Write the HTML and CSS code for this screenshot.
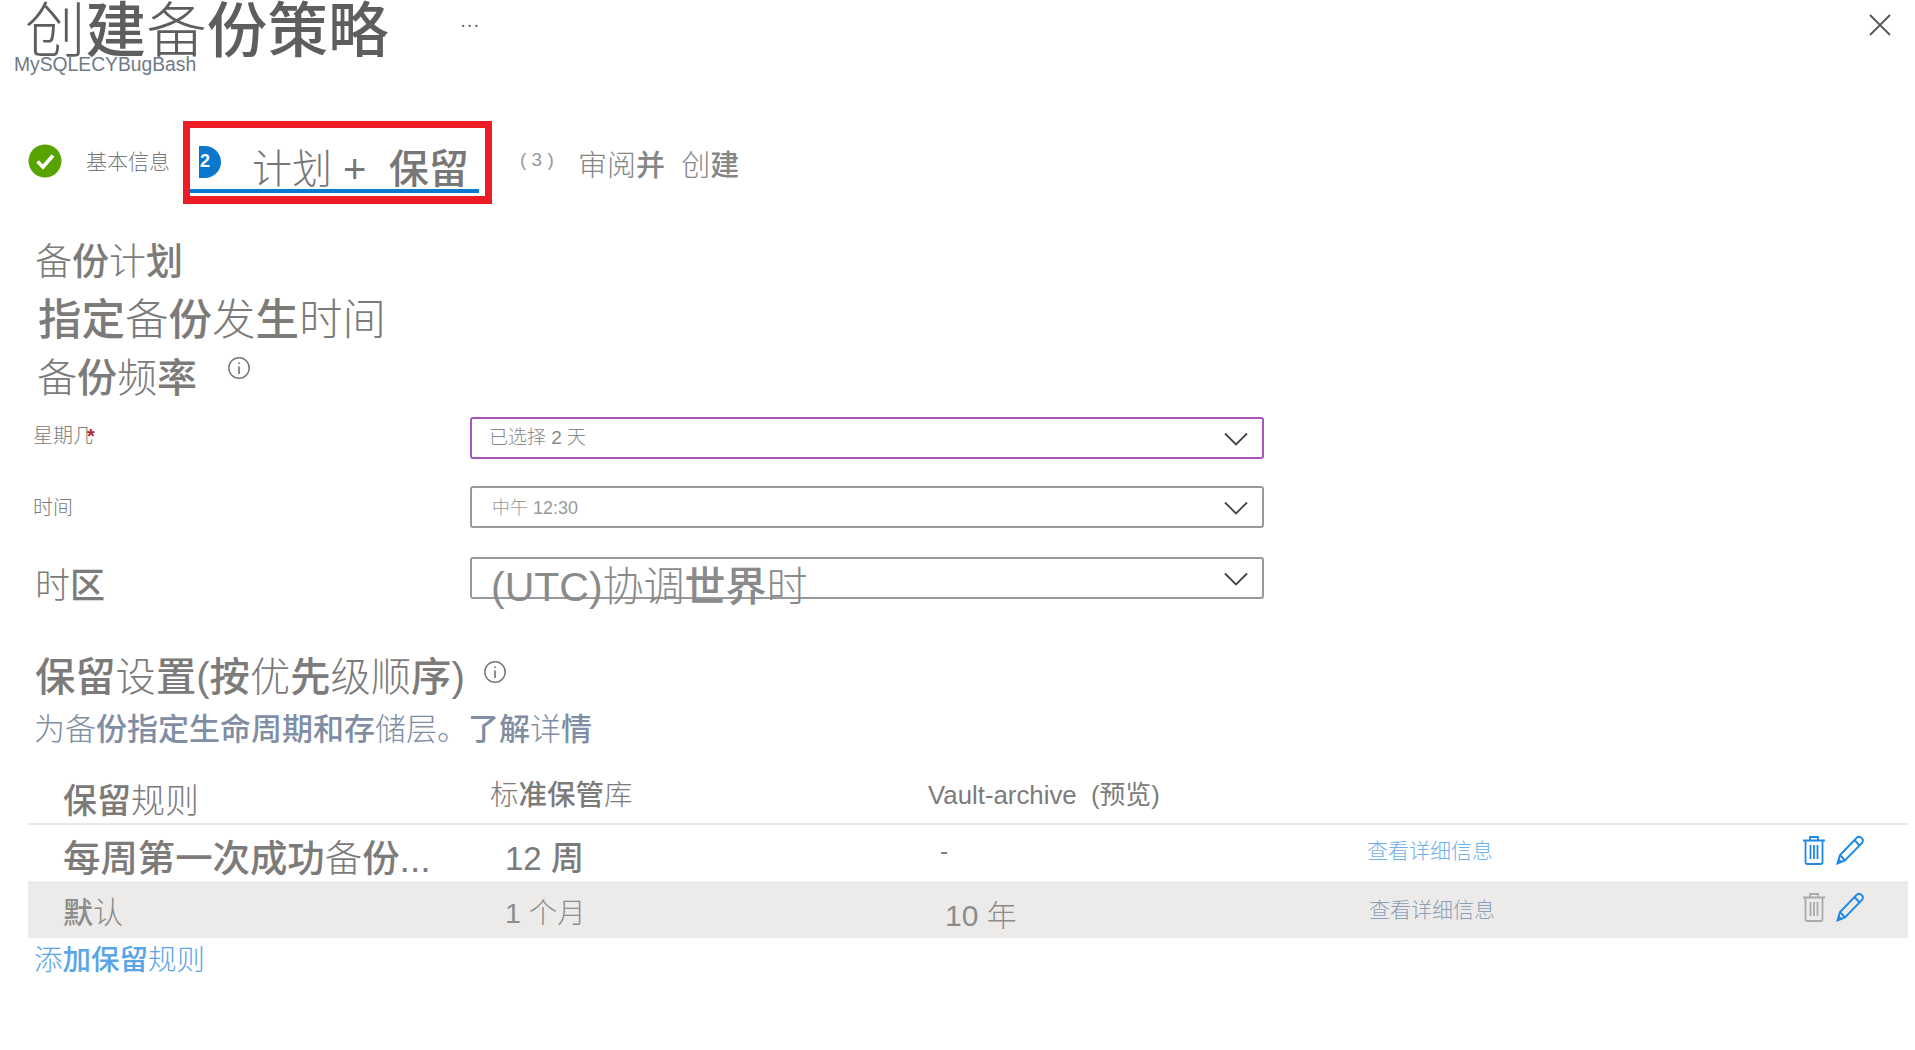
FILE: index.html
```html
<!DOCTYPE html>
<html lang="zh-CN">
<head>
	<meta charset="UTF-8">
	<title>创建备份策略</title>
	<link rel="stylesheet" href="styles.css">
</head>
<body>
<div class="page">
	<header class="top">
		<h1 class="title">创<b>建</b>备<b>份策略</b></h1>
		<span class="more">···</span>
		<svg class="close" width="24" height="24" viewBox="0 0 24 24"><path d="M2 2L22 22M22 2L2 22" stroke="#555" stroke-width="1.8" fill="none"/></svg>
	</header>
	<div class="sub">MySQLECYBugBash</div>

	<nav class="steps">
		<div class="step-done">
			<svg width="34" height="34" viewBox="0 0 34 34"><circle cx="17" cy="17" r="16.5" fill="#57a300"/><path d="M9.5 17.5L15 23L25 11.5" stroke="#fff" stroke-width="3.6" fill="none"/></svg>
			<span class="step-small">基本信息</span>
		</div>
		<div class="step-now">
			<span class="badge">2</span>
			<span class="step-big">计划 +&nbsp; <b>保留</b></span>
		</div>
		<div class="step-next">
			<span class="num">( 3 )</span>
			<span class="step-mid">审阅<b>并</b>&nbsp; 创<b>建</b></span>
		</div>
	</nav>

	<section class="plan">
		<h2 class="h-plan">备<b>份</b>计<b>划</b></h2>
		<h3 class="h-when"><b>指定</b>备<b>份</b>发<b>生</b>时间</h3>
		<h3 class="h-freq">备<b>份</b>频<b>率</b>
			<svg class="info" width="24" height="24" viewBox="0 0 24 24"><circle cx="12" cy="12" r="10.2" stroke="#777" stroke-width="1.5" fill="none"/><path d="M12 6.5V8M12 10.5V18" stroke="#666" stroke-width="1.5"/></svg>
		</h3>

		<div class="field field-day">
			<label class="lab">星期几<span class="req">*</span></label>
			<div class="select select-on">
				<span class="val-a">已选择 2 天</span>
				<svg class="chev" width="24" height="14" viewBox="0 0 24 14"><path d="M1 1.5L12 12.5L23 1.5" stroke="#444" stroke-width="1.8" fill="none"/></svg>
			</div>
		</div>
		<div class="field field-time">
			<label class="lab">时间</label>
			<div class="select">
				<span class="val-b">中午 12:30</span>
				<svg class="chev" width="24" height="14" viewBox="0 0 24 14"><path d="M1 1.5L12 12.5L23 1.5" stroke="#444" stroke-width="1.8" fill="none"/></svg>
			</div>
		</div>
		<div class="field field-zone">
			<label class="lab lab-big">时<b>区</b></label>
			<div class="select">
				<span class="val-c">(UTC)协调<b>世界</b>时</span>
				<svg class="chev" width="24" height="14" viewBox="0 0 24 14"><path d="M1 1.5L12 12.5L23 1.5" stroke="#444" stroke-width="1.8" fill="none"/></svg>
			</div>
		</div>
	</section>

	<section class="keep">
		<h3 class="h-keep"><b>保留</b>设<b>置</b>(<b>按</b>优<b>先</b>级顺<b>序</b>)
			<svg class="info" width="24" height="24" viewBox="0 0 24 24"><circle cx="12" cy="12" r="10.2" stroke="#777" stroke-width="1.5" fill="none"/><path d="M12 6.5V8M12 10.5V18" stroke="#666" stroke-width="1.5"/></svg>
		</h3>
		<p class="note">为备<b>份指定生命周期和存</b>储层。<b>了解</b>详<b>情</b></p>

		<div class="rules">
			<div class="row row-head">
				<div class="c1 head-a"><b>保留</b>规则</div>
				<div class="c2 head-b">标<b>准保管</b>库</div>
				<div class="c3 head-c">Vault-archive&nbsp; (预览)</div>
			</div>
			<div class="row row-one">
				<div class="c1 name-a"><b>每周第一次成功</b>备<b>份</b>...</div>
				<div class="c2 keep-a">12 <b>周</b></div>
				<div class="c3 dash">-</div>
				<div class="c4 more-a">查看详细信息</div>
				<div class="c5">
					<svg class="trash-on" width="24" height="30" viewBox="0 0 24 30"><path d="M1 5.5H23M8 5V2H16V5M3.5 6V27.5Q3.5 29 5 29H19Q20.5 29 20.5 27.5V6M8.5 10V24M12 10V24M15.5 10V24" stroke="currentColor" stroke-width="1.8" fill="none"/></svg>
					<svg class="pen" width="28" height="30" viewBox="0 0 28 30"><path d="M1.5 28.5L4 20L21 2.5Q23 1 25 2.5L26.5 4Q27.5 6 26 8L9 25.5ZM4 20L9 25.5M18.5 5L23.5 10.5" stroke="#1e88e5" stroke-width="1.9" fill="none"/><path d="M1.5 28.5L3 23.5L6.5 27Z" fill="#1e88e5"/></svg>
				</div>
			</div>
			<div class="row row-two">
				<div class="c1 name-b"><b>默</b>认</div>
				<div class="c2 keep-b">1 个月</div>
				<div class="c3 year">10 年</div>
				<div class="c4 more-b">查看详细信息</div>
				<div class="c5">
					<svg class="trash-off" width="24" height="30" viewBox="0 0 24 30"><path d="M1 5.5H23M8 5V2H16V5M3.5 6V27.5Q3.5 29 5 29H19Q20.5 29 20.5 27.5V6M8.5 10V24M12 10V24M15.5 10V24" stroke="currentColor" stroke-width="1.8" fill="none"/></svg>
					<svg class="pen" width="28" height="30" viewBox="0 0 28 30"><path d="M1.5 28.5L4 20L21 2.5Q23 1 25 2.5L26.5 4Q27.5 6 26 8L9 25.5ZM4 20L9 25.5M18.5 5L23.5 10.5" stroke="#1e88e5" stroke-width="1.9" fill="none"/><path d="M1.5 28.5L3 23.5L6.5 27Z" fill="#1e88e5"/></svg>
				</div>
			</div>
		</div>
		<a class="add">添<b>加保留</b>规则</a>
	</section>
</div>
</body>
</html>
```

FILE: styles.css
```css
* {
	box-sizing: border-box;
}

html, body {
	margin: 0;
	height: 100%;
	background: #fff;
	overflow: hidden;
}

body {
	font-family: "Liberation Sans", "Noto Sans CJK SC", sans-serif;
	font-weight: 300;
	color: #7d7b7a;
}

b {
	font-weight: 500;
}

h1, h2, h3, p {
	margin: 0;
	font-weight: 300;
}

.page {
	width: 1915px;
	height: 1050px;
}

/* header */
.top {
	display: flex;
	align-items: flex-start;
	height: 55px;
	padding-left: 25px;
	padding-right: 23px;
}

.title {
	font-size: 60.6px;
	line-height: 60px;
	height: 55px;
	padding-top: 1px;
	color: #605e5c;
}

.more {
	margin-left: 71px;
	margin-top: 12px;
	font-size: 20px;
	line-height: 24px;
	color: #666;
}

.close {
	margin-left: auto;
	margin-top: 13px;
}

.sub {
	margin-left: 14px;
	font-size: 19.3px;
	line-height: 20px;
	color: #6f7a85;
}

/* steps */
.steps {
	display: flex;
	align-items: flex-start;
	margin-top: 46px;
	height: 83px;
}

.step-done {
	display: flex;
	align-items: center;
	width: 183px;
	height: 80px;
	padding-left: 28px;
}

.step-small {
	margin-left: 24px;
	font-size: 21px;
	margin-top: -2px;
	color: #777;
}

.step-now {
	position: relative;
	width: 309px;
	height: 83px;
	border: 7px solid #ed1c24;
	border-bottom-width: 8px;
	overflow: hidden;
	display: flex;
	align-items: center;
	padding-left: 62px;
}

.step-now::after {
	content: "";
	position: absolute;
	left: 0;
	right: 6px;
	bottom: 3px;
	height: 4px;
	background: #0b78d0;
}

.badge {
	position: absolute;
	left: 9px;
	top: 18px;
	width: 22px;
	height: 32px;
	padding-left: 1px;
	border-radius: 0 16px 16px 0;
	background: #0b78d0;
	color: #fff;
	font-size: 18px;
	font-weight: 700;
	line-height: 31px;
}

.step-big {
	font-size: 40px;
	line-height: 50px;
	margin-top: 14px;
	white-space: nowrap;
	color: #777;
}

.step-next {
	display: flex;
	align-items: center;
	height: 80px;
	margin-left: 28px;
}

.num {
	width: 58px;
	font-size: 19px;
	color: #999;
	white-space: nowrap;
	margin-top: -2px;
}

.step-mid {
	font-size: 29px;
	margin-top: 4px;
	color: #868686;
	white-space: nowrap;
}

/* plan */
.plan {
	padding-left: 35px;
}

.h-plan {
	margin-top: 34px;
	font-size: 37px;
	line-height: 50px;
}

.h-when {
	margin-left: 3px;
	margin-top: 7px;
	font-size: 43.5px;
	line-height: 50px;
}

.h-freq {
	margin-left: 2px;
	margin-top: 8px;
	font-size: 40px;
	line-height: 50px;
	display: flex;
}

.info {
	margin-left: 30px;
	margin-top: 3px;
}

.field {
	display: flex;
	align-items: flex-start;
	margin-left: -35px;
}

.lab {
	width: 470px;
	padding-left: 33px;
	font-size: 20px;
	line-height: 28px;
	color: #7d7b7a;
}

.req {
	color: #b3262e;
	font-weight: 700;
	margin-left: -6px;
}

.lab-big {
	font-size: 35px;
	line-height: 50px;
	padding-left: 35px;
}

.select {
	position: relative;
	display: flex;
	align-items: center;
	width: 794px;
	height: 42px;
	border: 2px solid #999;
	border-radius: 3px;
}

.select-on {
	border-color: #a855bd;
}

.chev {
	position: absolute;
	right: 14px;
	top: 13px;
}

.field-day {
	margin-top: 14px;
}

.field-day .lab {
	margin-top: 5px;
}

.field-time {
	margin-top: 27px;
}

.field-time .lab {
	margin-top: 8px;
}

.field-zone {
	margin-top: 29px;
}

.field-zone .lab {
	margin-top: 4px;
}

.val-a {
	margin-left: 17px;
	margin-top: -5px;
	font-size: 19px;
	color: #888;
}

.val-b {
	margin-left: 20px;
	margin-top: -2px;
	font-size: 18px;
	color: #999;
}

.val-c {
	margin-left: 19px;
	margin-top: 5px;
	font-size: 41px;
	line-height: 50px;
	height: 38px;
	white-space: nowrap;
	color: #8a8a8a;
}

/* retention */
.keep {
	padding-left: 35px;
}

.h-keep {
	margin-top: 42px;
	font-size: 40.3px;
	line-height: 50px;
	display: flex;
}

.h-keep .info {
	margin-left: 18px;
	margin-top: 7px;
}

.note {
	margin-top: 5px;
	margin-left: -1px;
	font-size: 31px;
	line-height: 44px;
	color: #7f8ea3;
	white-space: nowrap;
}

.rules {
	width: 1880px;
	margin-left: -7px;
	margin-top: 20px;
}

.row {
	display: grid;
	grid-template-columns: 462px 438px 439px 433px 1fr;
	align-items: center;
}

.row-head {
	height: 53px;
	border-bottom: 2px solid #e8e8e8;
}

.row-one {
	height: 57px;
	border-bottom: 1px solid #eee;
}

.row-two {
	height: 56px;
	background: #ecebe9;
}

.c1 {
	padding-left: 35px;
	white-space: nowrap;
}

.head-a {
	font-size: 34px;
	margin-top: 2px;
}

.head-b {
	font-size: 28.5px;
	margin-top: -10px;
}

.head-c {
	font-size: 25.8px;
	margin-top: -10px;
	font-weight: 400;
	white-space: nowrap;
}

.name-a {
	font-size: 37.4px;
	line-height: 44px;
	margin-top: 12px;
}

.keep-a {
	padding-left: 15px;
	font-size: 33px;
	font-weight: 400;
	margin-top: 6px;
}

.dash {
	padding-left: 12px;
	font-size: 24px;
	margin-top: -5px;
}

.more-a {
	font-size: 21px;
	color: #6fb0e8;
	margin-top: -8px;
}

.name-b {
	font-size: 30px;
	color: #8c8c8c;
}

.keep-b {
	padding-left: 15px;
	font-size: 28.5px;
	color: #8c8c8c;
}

.year {
	padding-left: 17px;
	font-size: 30px;
	color: #8c8c8c;
	margin-top: 5px;
}

.more-b {
	padding-left: 2px;
	font-size: 21px;
	color: #8aa0b8;
	margin-top: -4px;
}

.c5 {
	display: flex;
	align-items: center;
	gap: 10px;
	padding-left: 2px;
	margin-top: -6px;
}

.trash-on {
	color: #1e88e5;
}

.trash-off {
	color: #aaa;
}

.add {
	display: block;
	margin-left: -1px;
	margin-top: 1px;
	font-size: 28.5px;
	line-height: 42px;
	color: #5aa5e6;
}
```
